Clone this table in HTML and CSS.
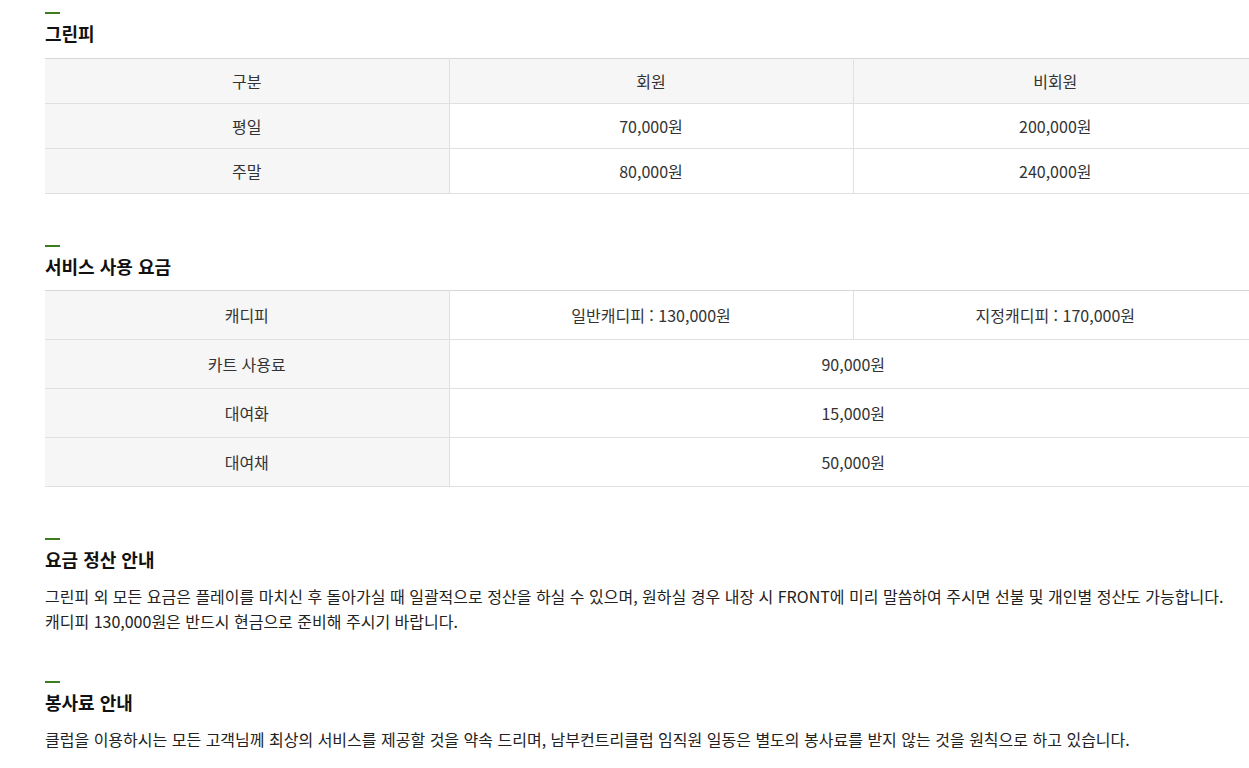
FILE: index.html
```html
<!DOCTYPE html>
<html lang="ko">
<head>
    <meta charset="utf-8">
    <title>이용요금</title>
    <link rel="stylesheet" href="styles.css">
</head>
<body>
    <div class="wrap">
        <div class="sec">
            <h3 class="tit">그린피</h3>
            <table class="tbl">
                <tr class="head"><th>구분</th><th>회원</th><th>비회원</th></tr>
                <tr><th>평일</th><td>70,000원</td><td>200,000원</td></tr>
                <tr><th>주말</th><td>80,000원</td><td>240,000원</td></tr>
            </table>
        </div>

        <div class="sec sec-svc">
            <h3 class="tit">서비스 사용 요금</h3>
            <table class="tbl tall">
                <tr><th>캐디피</th><td>일반캐디피 : 130,000원</td><td>지정캐디피 : 170,000원</td></tr>
                <tr><th>카트 사용료</th><td colspan="2">90,000원</td></tr>
                <tr><th>대여화</th><td colspan="2">15,000원</td></tr>
                <tr><th>대여채</th><td colspan="2">50,000원</td></tr>
            </table>
        </div>

        <div class="sec sec-txt">
            <h3 class="tit">요금 정산 안내</h3>
            <p class="txt">그린피 외 모든 요금은 플레이를 마치신 후 돌아가실 때 일괄적으로 정산을 하실 수 있으며, 원하실 경우 내장 시 FRONT에 미리 말씀하여 주시면 선불 및 개인별 정산도 가능합니다.<br>캐디피 130,000원은 반드시 현금으로 준비해 주시기 바랍니다.</p>
        </div>

        <div class="sec sec-txt">
            <h3 class="tit">봉사료 안내</h3>
            <p class="txt">클럽을 이용하시는 모든 고객님께 최상의 서비스를 제공할 것을 약속 드리며, 남부컨트리클럽 임직원 일동은 별도의 봉사료를 받지 않는 것을 원칙으로 하고 있습니다.</p>
        </div>
    </div>
</body>
</html>
```

FILE: styles.css
```css
html, body {
    margin: 0;
    overflow: hidden;
}

body {
    font-family: "Noto Sans CJK KR", "Noto Sans", sans-serif;
    color: #333;
    font-size: 16px;
    background: #fff;
}

.wrap {
    width: 1212px;
    padding: 12px 0 0 45px;
}

.sec {
    margin-bottom: 51px;
}

.sec-txt {
    margin-bottom: 47px;
}

.tit {
    margin: 0 0 13px;
    font-size: 18px;
    font-weight: bold;
    color: #111;
    line-height: 24px;
}

.sec-svc .tit {
    margin-bottom: 12px;
}

.sec-txt .tit {
    margin-bottom: 13px;
}

.tit:before {
    content: "";
    display: block;
    width: 15px;
    height: 2px;
    background-color: #3b7d1f;
    margin-bottom: 7px;
}

.tbl {
    width: 100%;
    border-collapse: collapse;
    table-layout: fixed;
    border-top: 1px solid #d6d6d6;
}

.tbl th, .tbl td {
    height: 44px;
    padding: 0;
    text-align: center;
    font-weight: normal;
    border-bottom: 1px solid #e0e0e0;
    border-left: 1px solid #e0e0e0;
    color: #333;
}

.tbl th {
    background-color: #f6f6f6;
    border-left: 0;
}

.tbl .head th {
    border-left: 1px solid #e0e0e0;
}

.tbl .head th:first-child {
    border-left: 0;
}

.tall th, .tall td {
    height: 48px;
}

.txt {
    margin: 0;
    line-height: 25px;
    color: #222;
}
```
